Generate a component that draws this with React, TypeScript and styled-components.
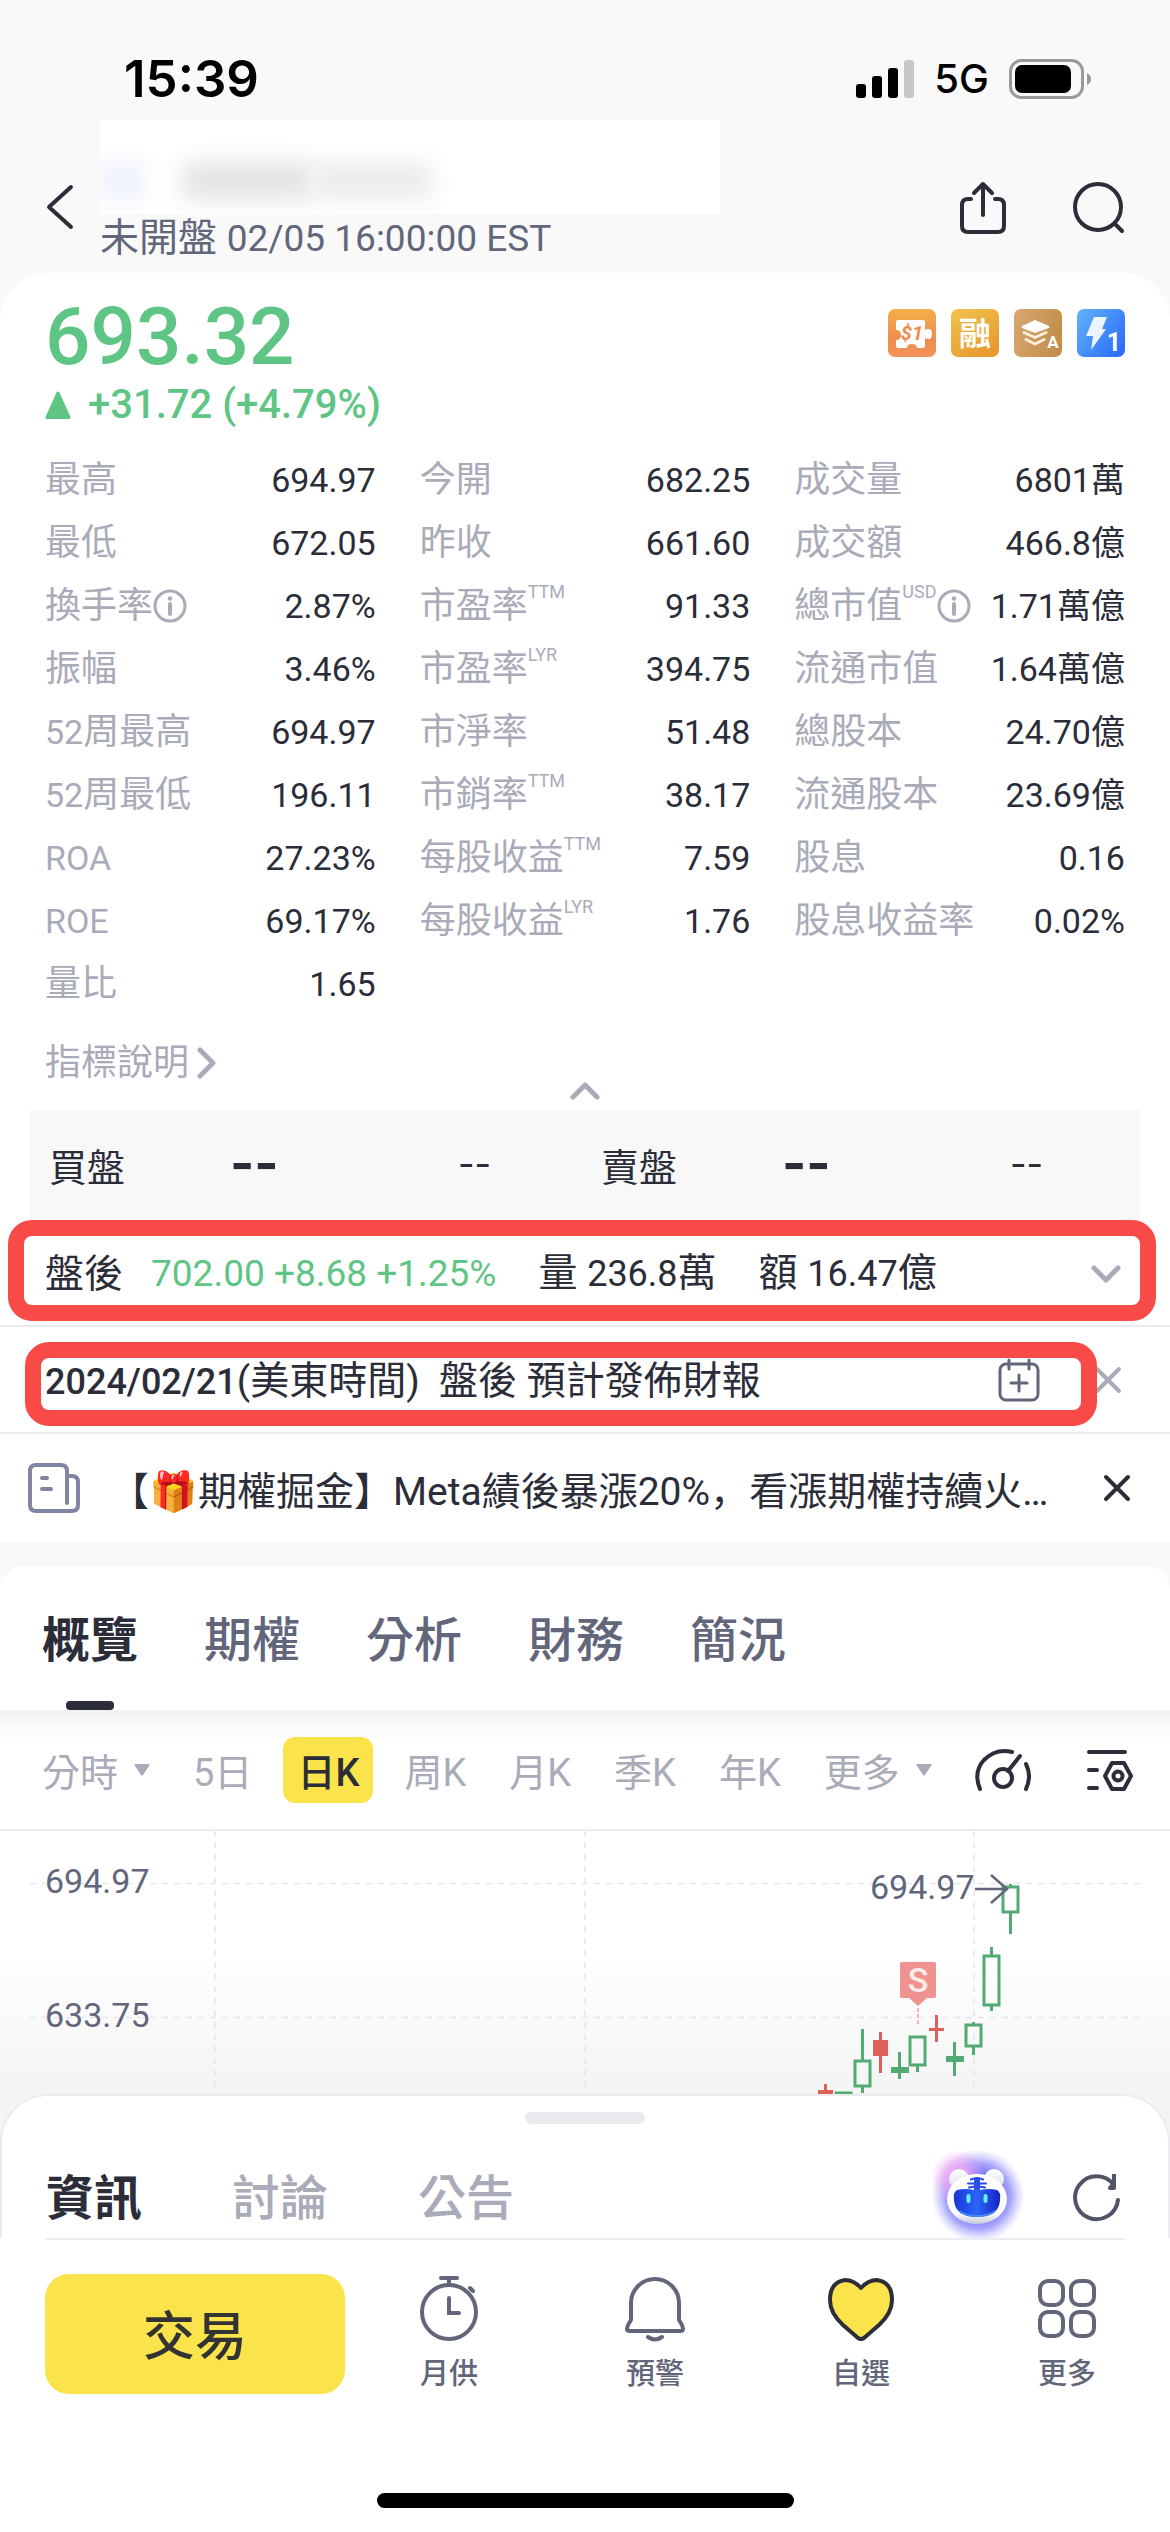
import React from "react";
import styled, { createGlobalStyle, css } from "styled-components";

const ink = "#2b2d39";
const slate = "#62667a";
const muted = "#a9abb8";
const green = "#5fc585";
const red = "#f84a46";
const yellow = "#fae34b";

const GlobalStyle = createGlobalStyle`
  * { box-sizing: border-box; }
  body {
    margin: 0;
    background: #f9f9f9;
    color: ${ink};
    font-family: Roboto, "Noto Sans CJK TC", sans-serif;
  }
  button { border: 0; padding: 0; margin: 0; background: none; color: inherit; font: inherit; cursor: pointer; white-space: nowrap; }
  svg { display: block; flex: none; }
`;

const Screen = styled.div`
  display: flex;
  flex-direction: column;
  min-height: 100vh;
  overflow: hidden;
`;

const StatusBar = styled.div`
  display: flex;
  align-items: center;
  justify-content: space-between;
  height: 119px;
  padding: 38px 79px 0 124px;
  color: #000;
`;
const Clock = styled.span`
  font: 600 51px/60px Inter, sans-serif;
`;
const StatusIcons = styled.div`
  display: flex;
  align-items: center;
  gap: 20px;
  font: 500 40px/60px Inter, sans-serif;
`;

const Header = styled.header`
  display: flex;
  align-items: flex-start;
  height: 154px;
  padding: 0 45px;
`;
const IconButton = styled.button`
  display: flex;
  align-items: center;
  justify-content: center;
`;
const BackButton = styled(IconButton)`
  height: 176px;
`;
const HeaderActions = styled.div`
  display: flex;
  gap: 66px;
  margin-left: auto;
  height: 178px;
  align-items: center;
`;
const TitleBlock = styled.div`
  display: flex;
  flex-direction: column;
  margin-left: 25px;
`;
const Redacted = styled.div`
  display: flex;
  align-items: center;
  width: 620px;
  height: 95px;
  padding-top: 28px;
  background: #fff;
  overflow: hidden;
`;
const Smudge = styled.span<{ $w: number; $left: number; $color: string }>`
  width: ${(p) => p.$w}px;
  height: 38px;
  margin-left: ${(p) => p.$left}px;
  background: ${(p) => p.$color};
  filter: blur(11px);
`;
const Session = styled.div`
  color: ${slate};
  font-size: 39px;
  line-height: 48px;
  white-space: nowrap;
`;
const Digits = styled.span<{ $size: number; $medium?: boolean }>`
  font-size: ${(p) => p.$size}px;
  font-weight: ${(p) => (p.$medium ? 500 : 400)};
`;
const Comma = styled.span`
  font-family: "Noto Sans CJK SC", sans-serif;
`;

const QuoteCard = styled.section`
  display: flex;
  flex-direction: column;
  padding: 22px 45px 0;
  background: #fff;
  border-radius: 48px 48px 0 0;
`;
const PriceRow = styled.div`
  display: flex;
  justify-content: space-between;
  align-items: flex-start;
`;
const Price = styled.div`
  color: ${green};
  font-weight: 500;
  font-size: 80px;
  line-height: 84px;
`;
const Badges = styled.div`
  display: flex;
  gap: 15px;
  padding-top: 14px;
`;
const Change = styled.div`
  display: flex;
  align-items: center;
  gap: 17px;
  height: 52px;
  color: ${green};
  font-weight: 500;
  font-size: 40px;
  line-height: 52px;
`;
const Stats = styled.div`
  display: grid;
  grid-template-columns: repeat(3, 1fr);
  grid-auto-flow: column;
  grid-template-rows: repeat(9, 63px);
  column-gap: 44px;
  margin-top: 17px;
`;
const Stat = styled.div`
  display: flex;
  align-items: center;
  justify-content: space-between;
  white-space: nowrap;
`;
const StatLabel = styled.span`
  display: flex;
  align-items: center;
  color: ${muted};
  font-size: 36px;
  line-height: 52px;
`;
const Sup = styled.span`
  align-self: flex-start;
  font-size: 18px;
  line-height: 24px;
`;
const StatValue = styled.span`
  font-size: 34px;
  line-height: 52px;
`;
const Explain = styled.button`
  display: flex;
  align-items: center;
  align-self: flex-start;
  gap: 8px;
  margin-top: 22px;
  color: ${muted};
  font-size: 36px;
  line-height: 52px;
`;
const Collapse = styled(IconButton)`
  align-self: center;
  height: 38px;
  margin-top: -17px;
`;

const White = styled.div`
  background: #fff;
`;
const BidAsk = styled.div`
  display: grid;
  grid-template-columns: 181px 228px 143px 181px 228px 1fr;
  align-items: center;
  height: 112px;
  margin: 0 30px;
  padding: 0 0 4px 19px;
  background: #f8f8f9;
  font-size: 38px;
`;
const Dash = styled.span<{ $bold?: boolean }>`
  font-family: Inter, sans-serif;
  font-size: ${(p) => (p.$bold ? 52 : 36)}px;
  font-weight: ${(p) => (p.$bold ? 700 : 400)};
  line-height: 56px;
`;

const Line = styled.div<{ $h: number; $rule?: boolean; $wide?: boolean }>`
  position: relative;
  display: flex;
  align-items: center;
  height: ${(p) => p.$h}px;
  padding: ${(p) => (p.$wide ? "0 39px 0 28px" : "0 48px 0 45px")};
  font-size: 39px;
  line-height: 56px;
  white-space: nowrap;
  ${(p) => p.$rule && css`border-bottom: 2px solid #ececf0;`}
`;
const Marker = styled.div<{ $top: number; $left: number; $right: number; $h: number }>`
  position: absolute;
  top: ${(p) => p.$top}px;
  left: ${(p) => p.$left}px;
  right: ${(p) => p.$right}px;
  height: ${(p) => p.$h}px;
  border: 16px solid ${red};
  border-radius: 24px;
  pointer-events: none;
`;
const Gain = styled.span`
  margin-left: 28px;
  color: ${green};
  font-size: 37px;
`;
const Figure = styled.span`
  margin-left: 42px;
`;
const Right = styled.div<{ $gap?: number }>`
  display: flex;
  align-items: center;
  gap: ${(p) => p.$gap || 0}px;
  margin-left: auto;
`;
const Notice = styled.span`
  padding-top: 4px;
`;
const News = styled(Notice)`
  flex: 1;
  min-width: 0;
  margin-left: 30px;
`;

const Gap = styled.div`
  height: 24px;
  background: #f8f8f9;
`;
const TabCard = styled.section`
  background: #fff;
  border-radius: 24px 24px 0 0;
`;
const Tabs = styled.nav<{ $gap: number }>`
  display: flex;
  gap: ${(p) => p.$gap}px;
`;
const Tab = styled.button<{ $on?: boolean; $off?: string }>`
  position: relative;
  font-size: 48px;
  font-weight: ${(p) => (p.$on ? 700 : 500)};
  line-height: 70px;
  color: ${(p) => (p.$on ? ink : p.$off || slate)};
`;
const MainTabs = styled(Tabs)`
  height: 144px;
  padding: 0 42px;
  ${Tab} { height: 144px; padding-top: 6px; }
  ${Tab}[aria-current="page"]::after {
    content: "";
    position: absolute;
    left: 50%;
    bottom: 0;
    width: 48px;
    height: 9px;
    margin-left: -24px;
    border-radius: 4px;
    background: ${ink};
  }
`;
const Periods = styled.div`
  display: flex;
  align-items: center;
  gap: 43px;
  height: 121px;
  padding: 0 36px 0 42px;
  background: linear-gradient(#f0f0f0, #fafafa 16px, #fff 32px);
  border-bottom: 2px solid #ececee;
`;
const Period = styled.button<{ $on?: boolean }>`
  display: flex;
  align-items: center;
  gap: 16px;
  height: 66px;
  margin: ${(p) => (p.$on ? "0 -12px" : "0")};
  padding: ${(p) => (p.$on ? "0 14px" : "0")};
  border-radius: 12px;
  background: ${(p) => (p.$on ? yellow : "none")};
  color: ${(p) => (p.$on ? ink : muted)};
  font-weight: ${(p) => (p.$on ? 500 : 400)};
  font-size: 38px;
`;

const ChartBox = styled.div`
  height: 263px;
  background: linear-gradient(#fff 45%, #f4f4f4);
  overflow: hidden;
  svg { width: 100%; height: 263px; }
  text { font-family: Roboto, sans-serif; fill: ${slate}; font-size: 34px; }
`;

const SheetWrap = styled.div`
  background: #f4f4f4;
`;
const Sheet = styled.section`
  display: flex;
  flex-direction: column;
  height: 144px;
  background: #fff;
  border: 2px solid #ececf0;
  border-bottom: 0;
  border-radius: 48px 48px 0 0;
  overflow: hidden;
`;
const Handle = styled.div`
  align-self: center;
  flex: none;
  width: 120px;
  height: 12px;
  margin-top: 16px;
  border-radius: 6px;
  background: #e9eaee;
`;
const SheetRow = styled.div`
  display: flex;
  flex: none;
  align-items: center;
  justify-content: space-between;
  height: 114px;
  padding: 36px 47px 0 44px;
`;
const Bottom = styled.div`
  flex: 1;
  background: #fff;
`;
const BottomBar = styled.footer`
  display: flex;
  align-items: flex-start;
  margin: 0 45px;
  padding: 34px 0 97px;
  border-top: 2px solid #ececee;
`;
const Trade = styled.button`
  width: 300px;
  height: 120px;
  padding-top: 8px;
  border-radius: 24px;
  background: ${yellow};
  color: #333;
  font-weight: 500;
  font-size: 52px;
  line-height: 112px;
`;
const Actions = styled.div`
  display: grid;
  grid-template-columns: repeat(4, 206px);
  flex: 1;
  justify-content: end;
  margin-right: -45px;
`;
const Action = styled.button`
  display: flex;
  flex-direction: column;
  align-items: center;
  gap: 10px;
  color: ${slate};
  font-weight: 500;
  font-size: 29px;
  line-height: 44px;
`;
const HomeBar = styled.div`
  width: 417px;
  height: 15px;
  margin: 0 auto;
  border-radius: 8px;
  background: #000;
`;

const Info = () => (
  <svg width="34" height="34" viewBox="0 0 34 34" fill="none" stroke={muted} strokeWidth="3">
    <circle cx="17" cy="17" r="15" />
    <path d="M17 15v10" strokeWidth="4" strokeLinecap="round" />
    <circle cx="17" cy="9.500" r="2.300" fill={muted} stroke="none" />
  </svg>
);
const Chevron = ({ d, w, h }: { d: string; w: number; h: number }) => (
  <svg width={w} height={h} viewBox={`0 0 ${w} ${h}`} fill="none" stroke={muted} strokeWidth="5" strokeLinecap="round" strokeLinejoin="round">
    <path d={d} />
  </svg>
);
const Cross = ({ color }: { color: string }) => (
  <svg width="28" height="28" viewBox="0 0 28 28" stroke={color} strokeWidth="4" strokeLinecap="round">
    <path d="M3 3l22 22M25 3L3 25" />
  </svg>
);
const Caret = () => (
  <svg width="16" height="12" viewBox="0 0 16 12"><path d="M1 0h14q1 0 .6 1L9 11q-1 1-2 0L.4 1Q0 0 1 0z" fill={muted} /></svg>
);

const stats: Array<[string, string, string?, boolean?]> = [
  ["最高", "694.97"], ["最低", "672.05"], ["換手率", "2.87%", "", true], ["振幅", "3.46%"],
  ["52周最高", "694.97"], ["52周最低", "196.11"], ["ROA", "27.23%"], ["ROE", "69.17%"], ["量比", "1.65"],
  ["今開", "682.25"], ["昨收", "661.60"], ["市盈率", "91.33", "TTM"], ["市盈率", "394.75", "LYR"],
  ["市淨率", "51.48"], ["市銷率", "38.17", "TTM"], ["每股收益", "7.59", "TTM"], ["每股收益", "1.76", "LYR"], ["", ""],
  ["成交量", "6801萬"], ["成交額", "466.8億"], ["總市值", "1.71萬億", "USD", true], ["流通市值", "1.64萬億"],
  ["總股本", "24.70億"], ["流通股本", "23.69億"], ["股息", "0.16"], ["股息收益率", "0.02%"],
];

const LabelText = ({ text }: { text: string }) => {
  const m = text.match(/^([0-9A-Z]+)(.*)$/);
  return m ? <><Digits $size={34}>{m[1]}</Digits>{m[2]}</> : <>{text}</>;
};

const BadgeIcons = () => (
  <Badges>
    <svg width="48" height="48" viewBox="0 0 48 48">
      <defs>
        <linearGradient id="b1" x2="0" y2="1"><stop stopColor="#f4b048" /><stop offset=".6" stopColor="#f08c50" /><stop offset="1" stopColor="#f2935a" /></linearGradient>
        <linearGradient id="b2" x2=".6" y2="1"><stop stopColor="#efc34f" /><stop offset="1" stopColor="#e89a30" /></linearGradient>
        <linearGradient id="b3" x2="1" y2=".3"><stop stopColor="#d9a871" /><stop offset="1" stopColor="#c38f4d" /></linearGradient>
        <linearGradient id="b4" x2="1" y2=".7"><stop stopColor="#62b4f8" /><stop offset="1" stopColor="#2f70fa" /></linearGradient>
      </defs>
      <rect width="48" height="48" rx="7" fill="url(#b1)" />
      <path d="M10 11h25q2 0 2 2v8q2-1 4-1 3 0 3 5t-3 5q-2 0-4-1v8q0 2-2 2h-6q0-4-5-4t-5 4h-9q-2 0-2-2v-6q5 0 5-5t-5-5v-8q0-2 2-2z" fill="#fff" />
      <text x="24" y="31" textAnchor="middle" fill="#ef8b4c" fontFamily="Roboto, sans-serif" fontWeight="700" fontStyle="italic" fontSize="20">$1</text>
    </svg>
    <svg width="48" height="48" viewBox="0 0 48 48">
      <rect width="48" height="48" rx="7" fill="url(#b2)" />
      <text x="24" y="36" textAnchor="middle" fill="#fff" fontFamily="Noto Sans CJK TC, sans-serif" fontWeight="700" fontSize="32">融</text>
    </svg>
    <svg width="48" height="48" viewBox="0 0 48 48">
      <rect width="48" height="48" rx="7" fill="url(#b3)" />
      <path d="M21 11l14 6q1 1 0 2l-14 5-13-5q-1-1 0-2z" fill="#fff" />
      <path d="M10 23.500l11 5 11-5M12 30.500l9 4.500 9-4.500" fill="none" stroke="#fbeedd" strokeWidth="3" strokeLinecap="round" strokeLinejoin="round" />
      <text x="39" y="39" textAnchor="middle" fill="#fff" fontFamily="Roboto, sans-serif" fontWeight="700" fontSize="17">A</text>
    </svg>
    <svg width="48" height="48" viewBox="0 0 48 48">
      <rect width="48" height="48" rx="7" fill="url(#b4)" />
      <path d="M17 8h13l-5 12h4L14 41l2-14H9z" fill="#eaf5ff" />
      <text x="37" y="42" textAnchor="middle" fill="#fff" fontFamily="Roboto, sans-serif" fontWeight="700" fontSize="25">1</text>
    </svg>
  </Badges>
);

type Candle = { x: number; hi: number; lo: number; top: number; bottom: number; up?: boolean };
const candles: Candle[] = [
  { x: 826, hi: 254, lo: 266, top: 260, bottom: 266 },
  { x: 844, hi: 262, lo: 270, top: 262, bottom: 270, up: true },
  { x: 863, hi: 199, lo: 263, top: 230, bottom: 257, up: true },
  { x: 881, hi: 202, lo: 243, top: 210, bottom: 226 },
  { x: 900, hi: 222, lo: 249, top: 237, bottom: 243, up: true },
  { x: 918, hi: 206, lo: 242, top: 206, bottom: 236, up: true },
  { x: 937, hi: 185, lo: 212, top: 198, bottom: 201 },
  { x: 955, hi: 212, lo: 246, top: 226, bottom: 232, up: true },
  { x: 974, hi: 192, lo: 225, top: 194, bottom: 217, up: true },
  { x: 992, hi: 117, lo: 181, top: 125, bottom: 176, up: true },
  { x: 1011, hi: 54, lo: 104, top: 56, bottom: 83, up: true },
];

const Chart = () => (
  <ChartBox>
    <svg viewBox="0 1 1170 263" preserveAspectRatio="none">
      <g stroke="#e6e6ec" strokeWidth="1.500" strokeDasharray="6 6">
        <path d="M30 53.500H1140M30 187.500H1140M215 0V258M585 0V258M974 0V258" />
      </g>
      <text x="45" y="63">694.97</text>
      <text x="45" y="197">633.75</text>
      {candles.map((c) => {
        const col = c.up ? "#52ab72" : "#de6058";
        const flat = c.bottom - c.top < 8;
        return (
          <g key={c.x} stroke={col} fill={c.up && !flat ? "none" : col}>
            <path d={`M${c.x - 0.5} ${c.hi}V${c.top}M${c.x - 0.5} ${c.bottom}V${c.lo}`} strokeWidth="3" />
            {flat || !c.up ? (
              <rect x={c.x - (c.up ? 9 : 8)} y={c.top} width={c.up ? 18 : 15} height={c.bottom - c.top} stroke="none" />
            ) : (
              <rect x={c.x - 8} y={c.top + 1} width="15" height={c.bottom - c.top - 2} strokeWidth="3" />
            )}
            {flat && <path d={`M${c.x - 0.5} ${c.hi}V${c.lo}`} strokeWidth="3" />}
          </g>
        );
      })}
      <path d="M902 132h32q2 0 2 2v32q0 2-2 2h-7l-9 8-9-8h-7q-2 0-2-2v-32q0-2 2-2z" fill="#ee9390" />
      <text x="918" y="162" textAnchor="middle" style={{ fill: "#fdeceb", fontWeight: 500 }}>S</text>
      <path d="M918 178v18" stroke="#f0a09d" strokeWidth="1.500" strokeDasharray="4 2" />
      <text x="870" y="69">694.97</text>
      <path d="M975 59h32M991 45l16 14-16 14" fill="none" stroke={slate} strokeWidth="2.500" />
    </svg>
  </ChartBox>
);

const Robot = () => (
  <svg width="96" height="96" viewBox="0 0 96 96">
    <defs>
      <radialGradient id="halo"><stop offset=".5" stopColor="#7f7cf9" /><stop offset=".7" stopColor="#928ffa" stopOpacity=".8" /><stop offset="1" stopColor="#b9b8fd" stopOpacity="0" /></radialGradient>
      <radialGradient id="pink"><stop stopColor="#f3a2f4" /><stop offset=".4" stopColor="#f0a6f4" stopOpacity=".8" /><stop offset="1" stopColor="#f3a2f4" stopOpacity="0" /></radialGradient>
      <linearGradient id="face"><stop stopColor="#1a35d4" /><stop offset=".5" stopColor="#2a66f8" /><stop offset="1" stopColor="#1722c4" /></linearGradient>
      <linearGradient id="head" x2="0" y2="1"><stop stopColor="#fff" /><stop offset=".8" stopColor="#fafafd" /><stop offset="1" stopColor="#c6c8d8" /></linearGradient>
      <linearGradient id="ear" x2="0" y2="1"><stop stopColor="#fff" /><stop offset="1" stopColor="#dedfe8" /></linearGradient>
    </defs>
    <circle cx="49" cy="45" r="47" fill="url(#halo)" />
    <circle cx="29" cy="26" r="27" fill="url(#pink)" />
    <circle cx="30" cy="28" r="10" fill="url(#ear)" />
    <circle cx="65" cy="28" r="10" fill="url(#ear)" />
    <ellipse cx="48" cy="48" rx="30" ry="25" fill="url(#head)" />
    <path d="M42 28.500q6-3 12 0M39 32.500h18M40 36.500q8-2 16 0" fill="none" stroke="#2748ea" strokeWidth="2" strokeLinecap="round" />
    <path d="M45 28h6v12h-6z" fill="#2650ee" />
    <path d="M28 39q9-2 17 0h6q8-2 17 0 4 2 3 10-1 17-23 17T25 49q-1-8 3-10z" fill="url(#face)" />
    <path d="M29 58q8 6 19 6t19-6q-5 8-19 8t-19-8z" fill="#3f8bfa" />
    <path d="M39.500 45v5M56.500 45v5" stroke="#66f0ff" strokeWidth="4" strokeLinecap="round" />
  </svg>
);

export default function App() {
  return (
    <Screen>
      <GlobalStyle />
      <StatusBar>
        <Clock>15:39</Clock>
        <StatusIcons>
          <svg width="58" height="38" viewBox="0 0 58 38">
            <rect y="24" width="10" height="14" rx="3" />
            <rect x="16" y="16" width="10" height="22" rx="3" />
            <rect x="32" y="8" width="10" height="30" rx="3" />
            <rect x="48" width="10" height="38" rx="3" fill="#c8c8c8" />
          </svg>
          <span>5G</span>
          <svg width="82" height="40" viewBox="0 0 82 40">
            <rect x="1.500" y="1.500" width="72" height="37" rx="11" fill="none" stroke="#999" strokeWidth="3" />
            <rect x="6" y="6" width="56" height="28" rx="7" />
            <path d="M78 14q4 2 4 6t-4 6z" fill="#999" />
          </svg>
        </StatusIcons>
      </StatusBar>

      <Header>
        <BackButton aria-label="返回">
          <svg width="30" height="46" viewBox="0 0 30 46" fill="none" stroke={ink} strokeWidth="4" strokeLinecap="round" strokeLinejoin="round"><path d="M26 3L4 23l22 20" /></svg>
        </BackButton>
        <TitleBlock>
          <Redacted>
            <Smudge $w={44} $left={0} $color="#eef1fd" />
            <Smudge $w={130} $left={38} $color="#e4e4e7" />
            <Smudge $w={120} $left={0} $color="#ececed" />
          </Redacted>
          <Session>未開盤 <Digits $size={37}>02/05 16:00:00 EST</Digits></Session>
        </TitleBlock>
        <HeaderActions>
          <IconButton aria-label="分享">
            <svg width="48" height="54" viewBox="0 0 48 54" fill="none" stroke={ink} strokeWidth="4" strokeLinecap="round" strokeLinejoin="round">
              <path d="M12 18H9q-6 0-6 6v21q0 6 6 6h30q6 0 6-6V24q0-6-6-6h-3M24 34V3M15 12l9-9 9 9" />
            </svg>
          </IconButton>
          <IconButton aria-label="搜尋">
            <svg width="52" height="52" viewBox="0 0 52 52" fill="none" stroke={ink} strokeWidth="4" strokeLinecap="round">
              <circle cx="25" cy="25" r="23" /><path d="M42 42l7 7" />
            </svg>
          </IconButton>
        </HeaderActions>
      </Header>

      <QuoteCard>
        <PriceRow>
          <Price>693.32</Price>
          <BadgeIcons />
        </PriceRow>
        <Change>
          <svg width="26" height="28" viewBox="0 0 26 28" fill={green}><path d="M11.500 1.500q1.500-2 3 0L25.500 26q.5 2-1.500 2H2q-2 0-1.500-2z" /></svg>
          <span>+31.72 (+4.79%)</span>
        </Change>
        <Stats>
          {stats.map(([label, value, sup, info], i) => (
            <Stat key={i}>
              <StatLabel><LabelText text={label} />{sup && <Sup>{sup}</Sup>}{info && <Info />}</StatLabel>
              <StatValue>{value}</StatValue>
            </Stat>
          ))}
        </Stats>
        <Explain>指標說明<Chevron w={20} h={34} d="M3 4l13 13L3 30" /></Explain>
        <Collapse aria-label="收起"><Chevron w={30} h={18} d="M3 15L15 3l12 12" /></Collapse>
      </QuoteCard>

      <White>
        <BidAsk>
          <span>買盤</span><Dash $bold>--</Dash><Dash>--</Dash>
          <span>賣盤</span><Dash $bold>--</Dash><Dash>--</Dash>
        </BidAsk>
        <Line $h={105} $rule>
          <span>盤後</span>
          <Gain>702.00 +8.68 +1.25%</Gain>
          <Figure>量 <Digits $size={36}>236.8</Digits>萬</Figure>
          <Figure>額 <Digits $size={36}>16.47</Digits>億</Figure>
          <Right><IconButton aria-label="展開"><Chevron w={32} h={20} d="M4 4l12 12L28 4" /></IconButton></Right>
          <Marker $top={-2} $left={8} $right={14} $h={101} />
        </Line>
        <Line $h={107} $rule>
          <Notice><Digits $size={36} $medium>2024/02/21</Digits>(美東時間)&nbsp; 盤後 預計發佈財報</Notice>
          <Right $gap={54}>
            <IconButton aria-label="加入日曆">
              <svg width="42" height="44" viewBox="0 0 42 44" fill="none" stroke={slate} strokeWidth="3" strokeLinecap="round">
                <rect x="2" y="6" width="38" height="36" rx="6" /><path d="M11 2v9M31 2v9M21 17v16M13 25h16" />
              </svg>
            </IconButton>
            <IconButton aria-label="關閉"><Cross color={muted} /></IconButton>
          </Right>
          <Marker $top={15} $left={25} $right={73} $h={84} />
        </Line>
        <Line $h={108} $wide>
          <svg width="52" height="50" viewBox="0 0 52 50" fill="none" stroke="#8184a2" strokeWidth="4" strokeLinecap="round">
            <path d="M39 40V8q0-6-6-6H8Q2 2 2 8v34q0 6 6 6h36q6 0 6-6V19q0-6-6-6h-5M14 15h5M14 26h9" />
          </svg>
          <News>【🎁期權掘金】Meta績後暴漲<Digits $size={39}>20%</Digits><Comma>，</Comma>看漲期權持續火…</News>
          <IconButton aria-label="關閉"><Cross color={ink} /></IconButton>
        </Line>
      </White>

      <Gap />
      <TabCard>
        <MainTabs $gap={66}>
          <Tab $on aria-current="page">概覽</Tab><Tab>期權</Tab><Tab>分析</Tab><Tab>財務</Tab><Tab>簡況</Tab>
        </MainTabs>
      </TabCard>
      <Periods>
        <Period>分時<Caret /></Period>
        <Period>5日</Period>
        <Period $on>日K</Period>
        <Period>周K</Period>
        <Period>月K</Period>
        <Period>季K</Period>
        <Period>年K</Period>
        <Period>更多<Caret /></Period>
        <IconButton aria-label="儀表">
          <svg width="56" height="44" viewBox="0 0 56 44" fill="none" stroke={ink} strokeWidth="4" strokeLinecap="round">
            <path d="M5 41Q-2 24 9 12 21 0 37 4M51 16q6 12 0 25M45 8L33 23" /><circle cx="28" cy="30" r="9" />
          </svg>
        </IconButton>
        <Right>
          <IconButton aria-label="設定">
            <svg width="48" height="44" viewBox="0 0 48 44" fill="none" stroke={ink} strokeWidth="4" strokeLinecap="round" strokeLinejoin="round">
              <path d="M3 4h36M3 22h8M3 40h8M26 15h12l7 13-7 13H26l-7-13z" /><circle cx="32" cy="28" r="4.500" />
            </svg>
          </IconButton>
        </Right>
      </Periods>
      <Chart />

      <SheetWrap>
        <Sheet>
          <Handle />
          <SheetRow>
            <Tabs $gap={90}>
              <Tab $on aria-current="page">資訊</Tab><Tab $off={muted}>討論</Tab><Tab $off={muted}>公告</Tab>
            </Tabs>
            <Right $gap={48}>
              <IconButton aria-label="助手"><Robot /></IconButton>
              <IconButton aria-label="重新整理">
                <svg width="48" height="50" viewBox="0 0 48 50" fill="none" stroke="#505466" strokeWidth="4" strokeLinecap="round" strokeLinejoin="round">
                  <path d="M45 26A21.500 21.500 0 1 1 41 11M41 1v13h-4l4-5" />
                </svg>
              </IconButton>
            </Right>
          </SheetRow>
        </Sheet>
      </SheetWrap>

      <Bottom>
        <BottomBar>
          <Trade>交易</Trade>
          <Actions>
            <Action>
              <svg width="64" height="68" viewBox="0 0 64 68" fill="none" stroke={slate} strokeWidth="4" strokeLinecap="round">
                <circle cx="32" cy="38" r="27" /><path d="M24 4h16M32 4v7M53 14l3 3M32 24v15h10" />
              </svg>月供
            </Action>
            <Action>
              <svg width="64" height="68" viewBox="0 0 64 68" fill="none" stroke={slate} strokeWidth="4" strokeLinecap="round" strokeLinejoin="round">
                <path d="M8 46V29a24 24 0 0 1 48 0v17q4 6 4 9 0 2-3 2H7q-3 0-3-2 0-3 4-9zM25 63q7 5 14 0" />
              </svg>預警
            </Action>
            <Action>
              <svg width="68" height="68" viewBox="0 0 68 68" fill={yellow} stroke={ink} strokeWidth="4" strokeLinejoin="round">
                <path d="M34 14Q27 6 18 6 3 8 3 26q0 13 13 25l15 13q3 2 6 0l15-13q13-12 13-25 0-18-15-20-9 0-16 8z" />
              </svg>自選
            </Action>
            <Action>
              <svg width="64" height="68" viewBox="0 0 64 68" fill="none" stroke={slate} strokeWidth="4">
                <rect x="5" y="7" width="23" height="24" rx="8" /><rect x="36" y="7" width="23" height="24" rx="8" />
                <rect x="5" y="38" width="23" height="24" rx="8" /><rect x="36" y="38" width="23" height="24" rx="8" />
              </svg>更多
            </Action>
          </Actions>
        </BottomBar>
        <HomeBar />
      </Bottom>
    </Screen>
  );
}
